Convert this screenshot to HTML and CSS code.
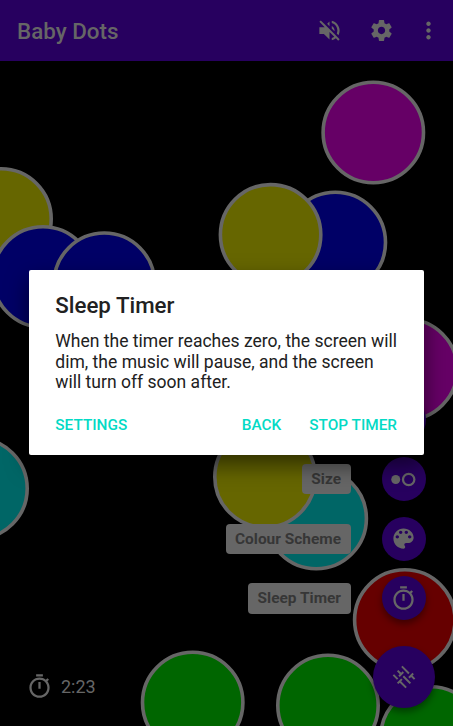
FILE: index.html
```html
<!DOCTYPE html>
<html lang="en">
<head>
<meta charset="utf-8">
<title>Baby Dots</title>
<link rel="stylesheet" href="styles.css">
</head>
<body>
<div class="app">
  <svg class="dots" viewBox="0 0 453 726">
    <circle class="magenta" cx="373.3" cy="132.5" r="50.2"/>
    <circle class="yellow" cx="1" cy="219" r="50.2"/>
    <circle class="blue" cx="43" cy="277" r="50.2"/>
    <circle class="blue" cx="104.3" cy="283.2" r="50.2"/>
    <circle class="blue" cx="335.3" cy="242.5" r="50.2"/>
    <circle class="yellow" cx="270.6" cy="234.8" r="50.2"/>
    <circle class="magenta" cx="407" cy="369.5" r="50.2"/>
    <circle class="cyan" cx="-23" cy="488.5" r="50.2"/>
    <circle class="cyan" cx="316.2" cy="518.5" r="50.2"/>
    <circle class="yellow" cx="265" cy="477" r="50.2"/>
    <circle class="red" cx="404.8" cy="620" r="50.2"/>
    <circle class="green" cx="192.7" cy="702.5" r="50.2"/>
    <circle class="green" cx="431" cy="737" r="50.2"/>
    <circle class="green" cx="328" cy="705.5" r="50.2"/>
  </svg>
  <header class="bar">
    <h1 class="bar-title">Baby Dots</h1>
    <svg class="icon mute" viewBox="0 0 24 24"><path d="M16.5 12c0-1.77-1.02-3.29-2.5-4.03v2.21l2.45 2.45c.03-.2.05-.41.05-.63zm2.5 0c0 .94-.2 1.82-.54 2.64l1.51 1.51C20.63 14.91 21 13.5 21 12c0-4.28-2.99-7.86-7-8.77v2.06c2.89.86 5 3.54 5 6.71zM4.27 3L3 4.27 7.73 9H3v6h4l5 5v-6.73l4.25 4.25c-.67.52-1.42.93-2.25 1.18v2.06c1.38-.31 2.63-.95 3.69-1.81L19.73 21 21 19.73l-9-9L4.27 3zM12 4L9.91 6.09 12 8.18V4z"/></svg>
    <svg class="icon gear" viewBox="0 0 24 24"><path d="M19.43 12.98c.04-.32.07-.64.07-.98s-.03-.66-.07-.98l2.11-1.65c.19-.15.24-.42.12-.64l-2-3.46c-.12-.22-.39-.3-.61-.22l-2.49 1c-.52-.4-1.08-.73-1.69-.98l-.38-2.65C14.46 2.18 14.25 2 14 2h-4c-.25 0-.46.18-.49.42l-.38 2.65c-.61.25-1.17.59-1.69.98l-2.49-1c-.23-.09-.49 0-.61.22l-2 3.46c-.13.22-.07.49.12.64l2.11 1.65c-.04.32-.07.65-.07.98s.03.66.07.98l-2.11 1.65c-.19.15-.24.42-.12.64l2 3.46c.12.22.39.3.61.22l2.49-1c.52.4 1.08.73 1.69.98l.38 2.65c.03.24.24.42.49.42h4c.25 0 .46-.18.49-.42l.38-2.65c.61-.25 1.17-.59 1.69-.98l2.49 1c.23.09.49 0 .61-.22l2-3.46c.12-.22.07-.49-.12-.64l-2.11-1.65zM12 15.5c-1.93 0-3.5-1.57-3.5-3.5s1.57-3.5 3.5-3.5 3.5 1.57 3.5 3.5-1.57 3.5-3.5 3.5z"/></svg>
    <svg class="icon more" viewBox="0 0 24 24"><path d="M12 8c1.1 0 2-.9 2-2s-.9-2-2-2-2 .9-2 2 .9 2 2 2zm0 2c-1.1 0-2 .9-2 2s.9 2 2 2 2-.9 2-2-.9-2-2-2zm0 6c-1.1 0-2 .9-2 2s.9 2 2 2 2-.9 2-2-.9-2-2-2z"/></svg>
  </header>
  <main class="stage">
    <div class="timer">
      <svg class="icon" viewBox="0 0 24 24"><path d="M15 1H9v2h6V1zm-4 13h2V8h-2v6zm8.03-6.61l1.42-1.42c-.43-.51-.9-.99-1.41-1.41l-1.42 1.42C16.07 4.74 14.12 4 12 4c-4.97 0-9 4.03-9 9s4.02 9 9 9 9-4.03 9-9c0-2.12-.74-4.07-1.97-5.61zM12 20c-3.87 0-7-3.13-7-7s3.13-7 7-7 7 3.13 7 7-3.13 7-7 7z"/></svg>
      <span>2:23</span>
    </div>
    <div class="dial">
      <div class="row"><span class="fab"></span></div>
      <div class="row"><span class="label">Size</span><span class="fab"><svg class="icon" viewBox="0 0 24 24"><circle cx="5.1" cy="12" r="4"/><circle class="ring" cx="16.6" cy="12" r="5.050"/></svg></span></div>
      <div class="row"><span class="label">Colour Scheme</span><span class="fab"><svg class="icon" viewBox="0 0 24 24"><path d="M12 3c-4.97 0-9 4.03-9 9s4.03 9 9 9c.83 0 1.5-.67 1.5-1.5 0-.39-.15-.74-.39-1.01-.23-.26-.38-.61-.38-.99 0-.83.67-1.5 1.5-1.5H16c2.76 0 5-2.24 5-5 0-4.42-4.03-8-9-8zm-5.500 9c-.83 0-1.500-.67-1.500-1.500S5.670 9 6.500 9 8 9.670 8 10.500 7.330 12 6.500 12zm3-4C8.670 8 8 7.330 8 6.500S8.670 5 9.500 5s1.500.67 1.500 1.500S10.330 8 9.500 8zm5 0c-.83 0-1.500-.67-1.500-1.500S13.670 5 14.500 5s1.500.67 1.500 1.500S15.330 8 14.500 8zm3 4c-.83 0-1.500-.67-1.500-1.500S16.670 9 17.500 9s1.500.67 1.500 1.500-.67 1.500-1.500 1.500z"/></svg></span></div>
      <div class="row"><span class="label">Sleep Timer</span><span class="fab"><svg class="icon" viewBox="0 0 24 24"><path d="M15 1H9v2h6V1zm-4 13h2V8h-2v6zm8.03-6.61l1.42-1.42c-.43-.51-.9-.99-1.41-1.41l-1.42 1.42C16.07 4.74 14.12 4 12 4c-4.97 0-9 4.03-9 9s4.02 9 9 9 9-4.03 9-9c0-2.12-.74-4.07-1.97-5.61zM12 20c-3.87 0-7-3.13-7-7s3.13-7 7-7 7 3.13 7 7-3.13 7-7 7z"/></svg></span></div>
      <span class="fab main"><svg class="icon tune" viewBox="0 0 24 24"><path d="M3 17v2h6v-2H3zM3 5v2h10V5H3zm10 16v-2h8v-2h-8v-2h-2v6h2zM7 9v2H3v2h4v2h2V9H7zm14 4v-2H11v2h10zm-6-4h2V7h4V5h-4V3h-2v6z"/></svg></span>
    </div>
  </main>
  <div class="overlay">
    <section class="dialog">
      <h2 class="dialog-title">Sleep Timer</h2>
      <p class="message">When the timer reaches zero, the screen will dim, the music will pause, and the screen will turn off soon after.</p>
      <div class="actions">
        <button class="action first">SETTINGS</button>
        <button class="action">BACK</button>
        <button class="action">STOP TIMER</button>
      </div>
    </section>
  </div>
</div>
</body>
</html>
```
FILE: styles.css
```css
* { box-sizing: border-box; }
body { margin: 0; background: #000; font-family: Roboto, sans-serif; }
.app { position: relative; width: 453px; height: 726px; overflow: hidden; display: flex; flex-direction: column; }
.dots { position: absolute; inset: 0; width: 453px; height: 726px; }
.dots circle { stroke: #666; stroke-width: 3.600px; }
.magenta { fill: #660066; }
.yellow { fill: #666600; }
.blue { fill: #000066; }
.cyan { fill: #006666; }
.red { fill: #660000; }
.green { fill: #006600; }

.icon { width: 27px; height: 27px; fill: #666; flex: none; overflow: visible; }
.bar { position: relative; height: 61px; background: #27005f; display: flex; align-items: center; padding: 0 11px 0 17px; }
.bar-title { margin: 1px auto 0 0; font-size: 22.400px; line-height: 28px; font-weight: 500; color: #666; }
.mute { margin-right: -.5px; }
.gear { width: 25px; height: 25px; margin-left: 27px; }
.more { margin-left: 21px; }

.stage { position: relative; flex: 1; display: flex; justify-content: space-between; align-items: flex-end; padding: 0 18.500px 18.500px 26px; }
.timer { display: flex; align-items: center; gap: 8px; height: 43px; color: #666; font-size: 18px; }
.dial { display: flex; flex-direction: column; align-items: flex-end; gap: 15.600px; }
.row { display: flex; align-items: center; gap: 31px; padding-right: 9px; }
.label { height: 30.500px; padding: 0 9.500px; border-radius: 4px; background: #666; color: #363636; font-size: 15.450px; font-weight: 700; line-height: 31px; }
.fab { width: 44px; height: 44px; border-radius: 50%; background: #27005f; display: flex; align-items: center; justify-content: center; box-shadow: 0 4px 7px rgba(0, 0, 0, .4); }
.main { width: 62px; height: 62px; margin-top: 9.500px; }
.tune { width: 24px; height: 24px; transform: rotate(45deg); }
.ring { fill: none; stroke: #666; stroke-width: 2px; }

.overlay { position: absolute; inset: 0; display: flex; align-items: center; justify-content: center; }
.dialog { width: 394.500px; height: 185.300px; margin-left: -.5px; margin-top: -.7px; padding: 21.500px 26.500px 0 26.300px; border-radius: 2px; background: #fff; box-shadow: 0 10px 22px rgba(0, 0, 0, .55); }
.dialog-title { margin: 0; font-size: 22.300px; line-height: 27px; font-weight: 500; color: #212121; }
.message { margin: 12.500px -6px 0 0; font-size: 17.550px; line-height: 20.600px; color: #212121; }
.actions { display: flex; gap: 28px; margin-top: 22px; }
.action { border: 0; padding: 0; background: none; font: 500 15.350px/20px Roboto, sans-serif; color: #03dac5; white-space: nowrap; }
.first { margin-right: auto; }
```
